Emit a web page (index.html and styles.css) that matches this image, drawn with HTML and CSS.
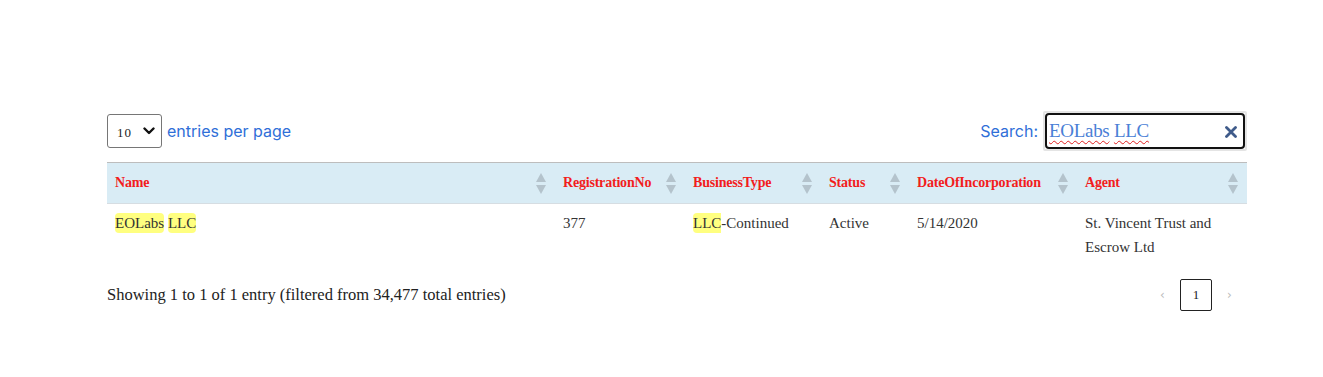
FILE: index.html
```html
<!DOCTYPE html>
<html>
<head>
<meta charset="utf-8">
<link rel="stylesheet" href="styles.css">
</head>
<body>
<div class="wrap">
  <div class="top">
    <div class="left">
      <div class="select"><span class="sel-val">10</span>
        <svg class="chev" width="12" height="8" viewBox="0 0 12 8"><path d="M1.5 1.5 L6 6 L10.5 1.5" fill="none" stroke="#111" stroke-width="2.4" stroke-linecap="round" stroke-linejoin="round"/></svg>
      </div>
      <span class="label">entries per page</span>
    </div>
    <div class="right">
      <span class="label">Search:</span>
      <div class="search-ring">
        <div class="search">
          <span class="q"><span class="sp">EOLabs</span> <span class="sp">LLC</span></span>
          <svg class="x" width="12" height="12" viewBox="0 0 12 12"><path d="M1.5 1.5 L10.5 10.5 M10.5 1.5 L1.5 10.5" stroke="#3f5b8a" stroke-width="2.8" stroke-linecap="round"/></svg>
        </div>
      </div>
    </div>
  </div>
  <table class="tbl">
    <thead>
      <tr>
        <th class="c-name"><div class="th"><span>Name</span><i class="sort"></i></div></th>
        <th class="c-reg"><div class="th"><span>RegistrationNo</span><i class="sort"></i></div></th>
        <th class="c-bt"><div class="th"><span>BusinessType</span><i class="sort"></i></div></th>
        <th class="c-st"><div class="th"><span>Status</span><i class="sort"></i></div></th>
        <th class="c-dt"><div class="th"><span>DateOfIncorporation</span><i class="sort"></i></div></th>
        <th class="c-ag"><div class="th"><span>Agent</span><i class="sort"></i></div></th>
      </tr>
    </thead>
    <tbody>
      <tr>
        <td><mark>EOLabs</mark> <mark>LLC</mark></td>
        <td>377</td>
        <td><mark class="sq">LLC</mark>-Continued</td>
        <td>Active</td>
        <td>5/14/2020</td>
        <td>St. Vincent Trust and Escrow Ltd</td>
      </tr>
    </tbody>
  </table>
  <div class="bottom">
    <div class="info">Showing 1 to 1 of 1 entry (filtered from 34,477 total entries)</div>
    <div class="pager">
      <span class="arr">‹</span>
      <span class="page">1</span>
      <span class="arr">›</span>
    </div>
  </div>
</div>
</body>
</html>
```

FILE: styles.css
```css
html, body { margin: 0; padding: 0; background: #fff; }
body { font-family: "Liberation Serif", "Times New Roman", serif; color: #222; }
.wrap { width: 1140px; margin: 0 0 0 107px; padding-top: 111px; }
.top { display: flex; justify-content: space-between; align-items: center; height: 40px; }
.left, .right { display: flex; align-items: center; }
.label { font-family: Inter, "Noto Sans", sans-serif; color: #2f6fd8; font-size: 16px; }
.left .label { margin-left: 5px; }
.right .label { margin-right: 5px; }
.select { border: 1px solid #767676; border-radius: 3px; display: flex; align-items: center; justify-content: space-between; padding: 0 6px 0 9px; box-sizing: border-box; width: 55px; height: 34px; }
.sel-val { font-size: 13px; padding-top: 3px; letter-spacing: 1px; }
.search-ring { border: 2px solid #e4e4e4; border-radius: 2px; box-sizing: border-box; width: 204px; height: 40px; }
.search { box-sizing: border-box; width: 200px; height: 36px; border: 2px solid #111; border-radius: 4px; display: flex; align-items: center; justify-content: space-between; padding: 0 6px 0 2px; }
.q { color: #4a80d6; font-size: 19px; letter-spacing: -0.3px; }
.sp { text-decoration: underline wavy #e02020; text-underline-offset: 3px; text-decoration-thickness: 1px; }
.x { margin-top: 1px; }
.tbl { width: 1140px; border-collapse: collapse; margin-top: 11px; table-layout: fixed; }
.tbl thead tr { background: #d9ecf5; }
.tbl th { border-top: 1px solid #bdbdbd; border-bottom: 1px solid #d6dde2; height: 40px; padding: 0 8px; text-align: left; color: #f21d1d; font-size: 14px; font-weight: bold; }
.th { display: flex; justify-content: space-between; align-items: center; }
.th span { white-space: nowrap; letter-spacing: -0.2px; }
.sort { display: block; width: 11px; height: 21px; position: relative; flex: none; }
.sort::before, .sort::after { content: ""; position: absolute; left: 0; border-left: 5.5px solid transparent; border-right: 5.5px solid transparent; }
.sort::before { top: 0; border-bottom: 9px solid #b4c3cc; }
.sort::after { bottom: 0; border-top: 9px solid #b4c3cc; }
.c-name { width: 432px; }
.c-reg { width: 114px; }
.c-bt { width: 120px; }
.c-st { width: 72px; }
.c-dt { width: 152px; }
.c-ag { width: 154px; }
.tbl td { vertical-align: top; padding: 7px 8px 10px; font-size: 15px; line-height: 24px; color: #333; }
mark { background: #ffff80; color: #333; border-radius: 4px; padding: 2px 0; }
mark.sq { border-radius: 4px 0 0 4px; }
.bottom { display: flex; justify-content: space-between; align-items: center; margin-top: 10px; }
.info { font-size: 16.5px; color: #222; }
.pager { display: flex; align-items: center; }
.arr { color: #bbb; font-size: 12px; width: 35px; text-align: center; font-family: "DejaVu Sans", sans-serif; }
.page { box-sizing: border-box; width: 32px; height: 32px; border: 1px solid #222; border-radius: 2px; display: flex; align-items: center; justify-content: center; font-size: 13px; }
```
